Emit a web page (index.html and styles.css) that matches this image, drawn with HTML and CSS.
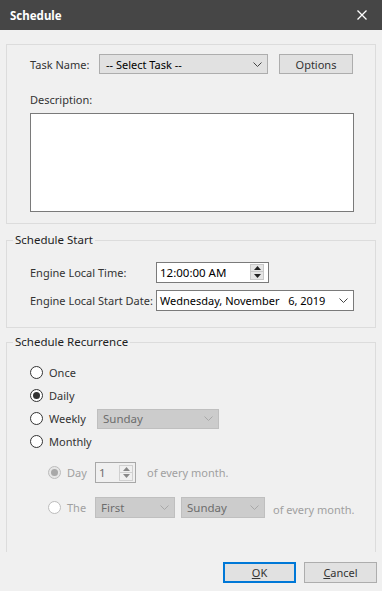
FILE: index.html
```html
<!DOCTYPE html>
<html lang="en">
<head>
  <meta charset="UTF-8" />
  <title>Schedule</title>
  <link rel="stylesheet" href="styles.css">
</head>
<body>
  <div class="titlebar">
    <span>Schedule</span>
    <svg class="close" width="10" height="10" viewBox="0 0 10 10"><path d="M0.5 0.5 L9.5 9.5 M9.5 0.5 L0.5 9.5" stroke="#fff" stroke-width="1.3"/></svg>
  </div>

  <div class="group task">
    <div class="row">
      <label class="lbl-task">Task Name:</label>
      <div class="combo combo-task">
        <span>-- Select Task --</span>
        <svg width="9" height="5" viewBox="0 0 9 5"><path d="M0.5 0.5 L4.5 4.5 L8.5 0.5" fill="none" stroke="#444"/></svg>
      </div>
      <button class="btn options">Options</button>
    </div>
    <div class="row desc-label">Description:</div>
    <div class="textarea"></div>
  </div>

  <fieldset class="group start">
    <legend>Schedule Start</legend>
    <div class="inner">
      <div class="row">
        <label class="lbl-start">Engine Local Time:</label>
        <div class="field time">
          <span>12:00:00 AM</span>
          <div class="spin">
            <div class="spin-btn"><svg width="7" height="4" viewBox="0 0 7 4"><path d="M3.5 0 L7 4 L0 4 Z" fill="#222"/></svg></div>
            <div class="spin-btn"><svg width="7" height="4" viewBox="0 0 7 4"><path d="M0 0 L7 0 L3.5 4 Z" fill="#222"/></svg></div>
          </div>
        </div>
      </div>
      <div class="row row-date">
        <label class="lbl-start">Engine Local Start Date:</label>
        <div class="field date">
          <span class="pre">Wednesday, November   6, 2019</span>
          <svg width="9" height="5" viewBox="0 0 9 5"><path d="M0.5 0.5 L4.5 4.5 L8.5 0.5" fill="none" stroke="#444"/></svg>
        </div>
      </div>
    </div>
  </fieldset>

  <fieldset class="group recur">
    <legend>Schedule Recurrence</legend>
    <div class="inner">
      <div class="radio-row"><span class="radio"></span><span>Once</span></div>
      <div class="radio-row"><span class="radio checked"></span><span>Daily</span></div>
      <div class="radio-row">
        <span class="radio"></span><span class="lbl-weekly">Weekly</span>
        <div class="combo disabled weekly">
          <span>Sunday</span>
          <svg width="9" height="5" viewBox="0 0 9 5"><path d="M0.5 0.5 L4.5 4.5 L8.5 0.5" fill="none" stroke="#a8a8a8"/></svg>
        </div>
      </div>
      <div class="radio-row"><span class="radio"></span><span>Monthly</span></div>

      <div class="sub">
        <div class="radio-row off day-row">
          <span class="radio checked"></span><span class="lbl-sub">Day</span>
          <div class="field spinbox">
            <span>1</span>
            <div class="spin">
              <div class="spin-btn"><svg width="7" height="4" viewBox="0 0 7 4"><path d="M3.5 0 L7 4 L0 4 Z" fill="#888"/></svg></div>
              <div class="spin-btn"><svg width="7" height="4" viewBox="0 0 7 4"><path d="M0 0 L7 0 L3.5 4 Z" fill="#888"/></svg></div>
            </div>
          </div>
          <span class="every">of every month.</span>
        </div>
        <div class="radio-row off the-row">
          <span class="radio"></span><span class="lbl-sub">The</span>
          <div class="combo disabled first">
            <span>First</span>
            <svg width="9" height="5" viewBox="0 0 9 5"><path d="M0.5 0.5 L4.5 4.5 L8.5 0.5" fill="none" stroke="#a8a8a8"/></svg>
          </div>
          <div class="combo disabled weekday">
            <span>Sunday</span>
            <svg width="9" height="5" viewBox="0 0 9 5"><path d="M0.5 0.5 L4.5 4.5 L8.5 0.5" fill="none" stroke="#a8a8a8"/></svg>
          </div>
          <span class="every every-low">of every month.</span>
        </div>
      </div>
    </div>
  </fieldset>

  <div class="footer">
    <button class="btn ok"><u>O</u>K</button>
    <button class="btn cancel"><u>C</u>ancel</button>
  </div>
</body>
</html>
```

FILE: styles.css
```css
*, *::before, *::after { box-sizing: border-box; }

body {
  margin: 0;
  width: 382px;
  height: 591px;
  overflow: hidden;
  background: #f0f0f0;
  font-family: "Noto Sans", "Open Sans", sans-serif;
  font-size: 11px;
  color: #333;
  white-space: nowrap;
}

.titlebar {
  height: 30px;
  display: flex;
  align-items: center;
  justify-content: space-between;
  padding: 0 15px 0 10px;
  background: #464646;
  color: #fff;
  font-weight: bold;
  font-size: 11.5px;
}

.group {
  margin: 0 6px;
  border: 1px solid #dcdcdc;
  min-width: 0;
}

.task {
  margin-top: 14px;
  height: 180px;
  padding: 9px 0 0 23px;
}

.row {
  display: flex;
  align-items: center;
  height: 20px;
}

.lbl-task { width: 69px; }

.combo {
  display: flex;
  align-items: center;
  justify-content: space-between;
  height: 20px;
  padding: 0 5px 0 6px;
  border: 1px solid #adadad;
  background: #e1e1e1;
  color: #000;
}

.combo-task { width: 169px; }

.btn {
  font: inherit;
  height: 21px;
  border: 1px solid #adadad;
  background: #e1e1e1;
  color: #333;
  padding: 0;
}

.options {
  width: 74px;
  height: 20px;
  margin-left: 11px;
}

.desc-label { margin-top: 15px; }

.textarea {
  margin-top: 4px;
  width: 324px;
  height: 99px;
  border: 1px solid #7a7a7a;
  background: #fff;
}

fieldset.group {
  padding: 0 0 0 6px;
}

legend {
  padding: 0 2px;
  line-height: 16px;
  font-size: 11.5px;
  color: #1e1e1e;
}

.start {
  margin-top: 8px;
  padding-bottom: 16px !important;
}

.start .inner {
  padding: 14px 0 0 17px;
}

.lbl-start { width: 126px; }

.field {
  display: flex;
  align-items: center;
  justify-content: space-between;
  height: 21px;
  border: 1px solid #7a7a7a;
  background: #fff;
  color: #000;
  padding: 0 4px 0 3px;
  font-size: 11.5px;
}

.time { width: 113px; }

.row-date { margin-top: 8px; height: 21px; }

.date { width: 198px; padding-right: 5px; font-size: 11px; }

.pre { white-space: pre; }

.spin {
  display: flex;
  flex-direction: column;
  width: 14px;
}

.spin-btn {
  height: 8px;
  display: flex;
  align-items: center;
  justify-content: center;
  background: #e5e5e5;
  border: 1px solid #c8c8c8;
}

.spin-btn + .spin-btn { border-top: none; height: 8px; }

.recur {
  margin-top: 6px;
  height: 218px;
  border-bottom: none;
}

.recur .inner {
  padding: 11px 0 0 17px;
}

.radio-row {
  display: flex;
  align-items: center;
  height: 23px;
}

.radio {
  width: 13px;
  height: 13px;
  border: 1px solid #333;
  border-radius: 50%;
  background: #fff;
  margin-right: 6px;
  display: flex;
  align-items: center;
  justify-content: center;
  flex-shrink: 0;
}

.radio.checked::after {
  content: "";
  width: 7px;
  height: 7px;
  border-radius: 50%;
  background: #333;
}

.lbl-weekly { width: 48px; }

.combo.disabled {
  border-color: #bfbfbf;
  background: #cccccc;
  color: #6d6d6d;
  padding-left: 5px;
  font-size: 11.5px;
}

.weekly { width: 122px; }

.sub { padding-left: 18px; }

.off { color: #a0a0a0; }

.off .radio {
  border-color: #bcbcbc;
  background: #fff;
}

.off .radio.checked { background: #e6e6e6; }
.off .radio.checked::after { background: #a8a8a8; }

.day-row { margin-top: 8px; }

.the-row { margin-top: 12px; }

.lbl-sub { width: 28px; }

.spinbox {
  width: 41px;
  border-color: #a8a8a8;
  background: #f0f0f0;
  color: #6d6d6d;
  padding-right: 2px;
}

.spinbox .spin-btn {
  background: #f0f0f0;
  border-color: #d0d0d0;
}

.every { margin-left: 11px; }

.first { width: 80px; height: 21px; }

.weekday { width: 84px; height: 21px; margin-left: 6px; }

.every-low { margin-left: 8px; padding-top: 3px; }

.footer {
  display: flex;
  justify-content: flex-end;
  gap: 8px;
  padding: 10px 5px 0 0;
}

.ok, .cancel {
  width: 73px;
}

.ok { border: 2px solid #0078d7; }
```
